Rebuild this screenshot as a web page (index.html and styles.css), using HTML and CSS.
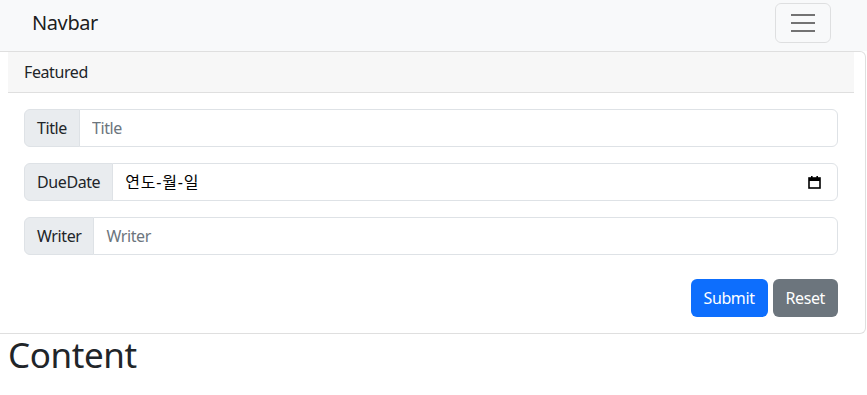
FILE: index.html
```html
<!DOCTYPE html>
<html lang="ko">
<head>
    <meta charset="UTF-8">
    <meta name="viewport" content="width=device-width, initial-scale=1.0">
    <title>Todo</title>
    <link rel="stylesheet" href="styles.css">
</head>
<body>

    <nav class="navbar">
        <a class="navbar-brand" href="#">Navbar</a>
        <button class="navbar-toggler" type="button" aria-label="Toggle navigation">
            <span class="toggler-icon"></span>
        </button>
    </nav>

    <div class="card">
        <div class="card-header">Featured</div>
        <form class="card-body">
            <div class="input-group">
                <span class="input-group-text">Title</span>
                <input type="text" class="form-control" placeholder="Title">
            </div>
            <div class="input-group">
                <span class="input-group-text">DueDate</span>
                <div class="form-control date-control">
                    <span class="date-text">연도-월-일</span>
                    <svg class="calendar-icon" width="13" height="14" viewBox="0 0 13 14">
                        <rect x="1" y="3" width="11" height="10" fill="none" stroke="#000" stroke-width="1.6"/>
                        <rect x="1" y="3" width="11" height="3" fill="#000"/>
                        <rect x="3" y="1" width="1.6" height="3" fill="#000"/>
                        <rect x="8.4" y="1" width="1.6" height="3" fill="#000"/>
                    </svg>
                </div>
            </div>
            <div class="input-group">
                <span class="input-group-text">Writer</span>
                <input type="text" class="form-control" placeholder="Writer">
            </div>
            <div class="form-actions">
                <button type="button" class="btn btn-primary">Submit</button>
                <button type="reset" class="btn btn-secondary">Reset</button>
            </div>
        </form>
    </div>

    <h1 class="content-title">Content</h1>

</body>
</html>
```

FILE: styles.css
```css
* {
    box-sizing: border-box;
}

body {
    margin: 0;
    font-family: "Noto Sans", "Noto Sans CJK KR", sans-serif;
    font-size: 16px;
    line-height: 1.5;
    letter-spacing: -0.025em;
    color: #212529;
    background: white;
}

/* Navbar */
.navbar {
    display: flex;
    justify-content: space-between;
    align-items: center;
    height: 51px;
    padding: 3px 36px 8px 32px;
    background-color: #f8f9fa;
}

.navbar-brand {
    font-size: 20px;
    line-height: 30px;
    color: rgba(0,0,0,0.9);
    text-decoration: none;
}

.navbar-toggler {
    width: 56px;
    height: 40px;
    padding: 0;
    display: flex;
    align-items: center;
    justify-content: center;
    background: transparent;
    border: 1px solid rgba(0,0,0,0.1);
    border-radius: 6px;
}

.toggler-icon {
    display: block;
    width: 24px;
    height: 18px;
    background: linear-gradient(#737373, #737373) 0 0 / 100% 2px no-repeat,
                linear-gradient(#737373, #737373) 0 8px / 100% 2px no-repeat,
                linear-gradient(#737373, #737373) 0 16px / 100% 2px no-repeat;
}

/* Card */
.card {
    margin-right: 1px;
    padding: 0 11px 0 8px;
    border: 1px solid #dfdfdf;
    border-left: none;
    border-radius: 0 6px 6px 0;
}

.card-header {
    padding: 8px 16px;
    background: #f7f7f7;
    border-bottom: 1px solid #dfdfdf;
}

.card-body {
    display: flex;
    flex-direction: column;
    gap: 16px;
    padding: 16px;
}

/* Inputs */
.input-group {
    display: flex;
}

.input-group-text {
    padding: 6px 12px;
    background: #e9ecef;
    border: 1px solid #dee2e6;
    border-radius: 6px 0 0 6px;
    white-space: nowrap;
}

.form-control {
    flex: 1;
    min-width: 0;
    height: 38px;
    margin-left: -1px;
    padding: 6px 12px;
    font: inherit;
    letter-spacing: inherit;
    color: #212529;
    background: white;
    border: 1px solid #dee2e6;
    border-radius: 0 6px 6px 0;
}

.form-control::placeholder {
    color: #6c757d;
}

.date-control {
    display: flex;
    align-items: center;
    justify-content: space-between;
    padding-right: 16px;
    color: #000;
}

.date-text {
    letter-spacing: 0.05em;
}

.calendar-icon {
    display: block;
}

/* Buttons */
.form-actions {
    display: flex;
    justify-content: flex-end;
    gap: 5px;
    margin-top: 8px;
}

.btn {
    padding: 6px 12px;
    font: inherit;
    letter-spacing: inherit;
    color: white;
    border: 1px solid transparent;
    border-radius: 6px;
    cursor: pointer;
}

.btn-primary {
    background: #0d6efd;
}

.btn-secondary {
    background: #6c757d;
}

.content-title {
    margin: 0;
    padding: 0 8px;
    font-size: 35px;
    font-weight: 400;
    line-height: 1.2;
}
```
